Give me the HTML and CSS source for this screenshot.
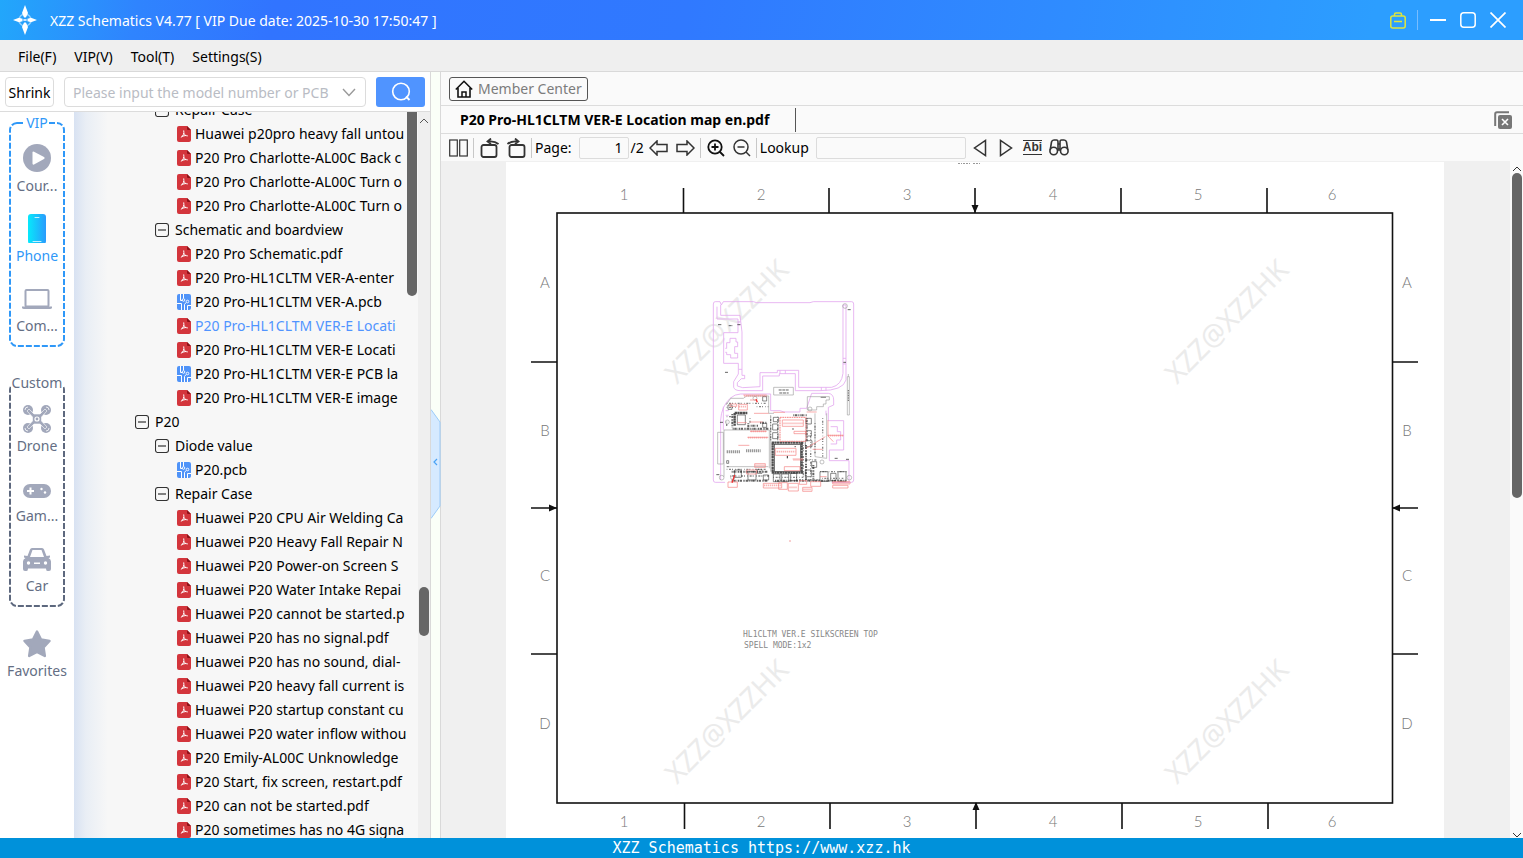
FILE: index.html
```html
<!DOCTYPE html>
<html lang="en">
<head>
<meta charset="utf-8">
<title>XZZ Schematics</title>
<link rel="stylesheet" href="styles.css">
</head>
<body>
<svg class="defs" aria-hidden="true">
  <symbol id="pdf" viewBox="0 0 14 16"><path d="M2 0H10L14 4V14a2 2 0 0 1-2 2H2a2 2 0 0 1-2-2V2a2 2 0 0 1 2-2z" fill="#d3353c"/><path d="M10 0L14 4H11a1 1 0 0 1-1-1z" fill="#8e1218"/><path d="M6.800 4.800C7.400 7.500 6 10 4.500 11.300M6.900 7.500C7.600 9 8.800 9.800 10.400 9.900M4.800 10.300L8.800 9.500" fill="none" stroke="#fff" stroke-width="1" stroke-linecap="round"/></symbol>
  <symbol id="pcb" viewBox="0 0 14 16"><rect width="14" height="16" rx="2" fill="#4f93f8"/><path d="M3.500 0V6.500H5.500M6.500 0V4.500M0 9.500H4.500V16M7.500 16V10.500L9 8.500M10.500 16V11.500H14" fill="none" stroke="#fff"/><circle cx="6.500" cy="6" r="1.300" fill="#4f93f8" stroke="#fff" stroke-width=".9"/><circle cx="10.500" cy="7.500" r="1.300" fill="#4f93f8" stroke="#fff" stroke-width=".9"/></symbol>
  <symbol id="minus" viewBox="0 0 14 14"><rect x=".5" y=".5" width="13" height="13" rx="2.500" fill="none" stroke="#333" stroke-width="1.100"/><path d="M3 7H11" stroke="#333" stroke-width="1.200"/></symbol>
</svg>

<header class="titlebar">
  <svg class="logo" viewBox="0 0 26 30"><circle cx="13" cy="15" r="6" fill="none" stroke="#8fd0ff" stroke-width="1.500"/><path d="M13 0L16 8 13.700 13H12.300L10 8zM13 30L16 22 13.700 17H12.300L10 22zM1 15L7 12.800 12 14.300V15.700L7 17.200zM25 15L19 12.800 14 14.300V15.700L19 17.200z" fill="#fff"/><path d="M13 12V18M10 15H16" stroke="#2a9bfc"/><circle cx="13" cy="15" r="1" fill="#fff"/></svg>
  <h1 class="title">XZZ Schematics V4.77 [ VIP Due date: 2025-10-30 17:50:47 ]</h1>
  <div class="window-controls">
    <button aria-label="Toolbox"><svg width="16" height="17" viewBox="0 0 16 17" fill="none" stroke="#dfe63c" stroke-width="1.500"><rect x=".8" y="4" width="14.400" height="12" rx="2"/><path d="M4.500 4V2.500A1.500 1.500 0 0 1 6 1H10a1.500 1.500 0 0 1 1.500 1.500V4M4 9.500H12" /></svg></button>
    <span class="control-line"></span>
    <button aria-label="Minimize"><svg width="16" height="16"><path d="M0 8H16" stroke="#fff" stroke-width="2"/></svg></button>
    <button aria-label="Maximize"><svg width="16" height="16"><rect x=".8" y=".8" width="14.400" height="14.400" rx="3" fill="none" stroke="#fff" stroke-width="1.500"/></svg></button>
    <button aria-label="Close"><svg width="16" height="16"><path d="M.5 .5L15.500 15.500M15.500 .5L.5 15.500" stroke="#fff" stroke-width="1.700"/></svg></button>
  </div>
</header>

<nav class="menubar">
  <button>File(F)</button><button>VIP(V)</button><button>Tool(T)</button><button>Settings(S)</button>
</nav>

<main class="workspace">
  <aside class="sidebar">
    <form class="search">
      <button type="button" class="shrink">Shrink</button>
      <div class="combo">
        <input type="text" aria-label="Model search" placeholder="Please input the model number or PCB">
        <button type="button" aria-label="History"><svg width="14" height="9"><path d="M1 1L7 7.500 13 1" fill="none" stroke="#999" stroke-width="1.400"/></svg></button>
      </div>
      <button type="button" class="go" aria-label="Search"><svg width="20" height="20" fill="none" stroke="#fff" stroke-width="1.600"><circle cx="10" cy="9.500" r="8.300"/><path d="M15 14.500L18.500 18" stroke-width="2"/></svg></button>
    </form>
    <div class="side-body">
      <nav class="rail">
        <section class="group vip">
          <svg class="frame"><rect x="1" y="1"/></svg>
          <h2>VIP</h2>
          <button><svg viewBox="0 0 30 30"><circle cx="15" cy="15" r="14" fill="#a2a8bb"/><path d="M10.500 9.500Q10.500 8 12 8.700L22 14Q23.500 15 22 16L12 21.500Q10.500 22 10.500 20.500z" fill="#fff"/></svg><span>Cour...</span></button>
          <button class="active"><svg viewBox="0 0 30 30"><defs><linearGradient id="ph"><stop stop-color="#07e9fb"/><stop offset="1" stop-color="#2a9bfd"/></linearGradient></defs><rect x="6" y="1" width="18" height="30" rx="3" fill="url(#ph)"/><path d="M13 4.500H17M11 28.500H19" stroke="#c4f2ff" stroke-linecap="round"/></svg><span>Phone</span></button>
          <button><svg viewBox="0 0 30 30"><rect x="3.500" y="7" width="23" height="16.500" rx="1" fill="none" stroke="#a2a8bb" stroke-width="2"/><path d="M0 23.500H30V25Q29.500 26 28 26H2Q.5 26 0 25z" fill="#a2a8bb"/></svg><span>Com...</span></button>
        </section>
        <section class="group custom">
          <svg class="frame"><rect x="1" y="1"/></svg>
          <h2>Custom</h2>
          <button><svg viewBox="0 0 30 30"><g fill="#a2a8bb" transform="translate(0 1)"><circle cx="6" cy="6" r="5"/><circle cx="24" cy="6" r="5"/><circle cx="6" cy="24" r="5"/><circle cx="24" cy="24" r="5"/><path d="M5 7L7 5 12 10H18L23 5 25 7 19.500 13V17L25 23 23 25 18 20H12L7 25 5 23 10.500 17V13z" stroke="#fff" stroke-width=".6"/><circle cx="15" cy="15" r="2" fill="none" stroke="#fff" stroke-width="1.200"/></g><path d="M3 7a3 3 0 0 1 3-3M27 7a3 3 0 0 0-3-3M3 25a3 3 0 0 0 3 3M27 25a3 3 0 0 1-3 3" stroke="#fff" stroke-width=".8" fill="none"/></svg><span>Drone</span></button>
          <button><svg viewBox="0 0 30 30"><rect x="1" y="11" width="28" height="14" rx="7" fill="#a2a8bb"/><path d="M8.500 14.500V21.500M5 18H12" stroke="#fff" stroke-width="2"/><circle cx="19.500" cy="16" r="1.200" fill="#fff"/><circle cx="23" cy="19.500" r="1.200" fill="#fff"/></svg><span>Gam...</span></button>
          <button><svg viewBox="0 0 30 30"><path d="M8 6.500Q8.500 5 10 5H20Q21.500 5 22 6.500L24.500 13 28 12.500V14.500L26.500 15Q29 16 29 18.500V26Q29 28 27 28H25.500Q24 28 24 25.500H6Q6 28 4.500 28H3Q1 28 1 26V18.500Q1 16 3.500 15L2 14.500V12.500L5.500 13z" fill="#a2a8bb"/><path d="M10.500 7H19.500L22 14H8zM12 19.500H18V21H12z" fill="#fff"/><circle cx="6.500" cy="20" r="1.700" fill="#fff"/><circle cx="23.500" cy="20" r="1.700" fill="#fff"/></svg><span>Car</span></button>
        </section>
        <button class="favorites"><svg viewBox="0 0 30 30"><path d="M15 3.500L19 11.500 27.500 13 21.500 19.300 22.800 28 15 24 7.200 28 8.500 19.300 2.500 13 11 11.500z" fill="#a2a8bb" stroke="#a2a8bb" stroke-width="2.500" stroke-linejoin="round"/></svg><span>Favorites</span></button>
      </nav>
      <div class="tree">
        <ul>
          <li class="folder inner"><button aria-label="Collapse"><svg><use href="#minus"/></svg></button>Repair Case</li>
          <li><a href="#"><svg><use href="#pdf"/></svg>Huawei p20pro heavy fall untou</a></li>
          <li><a href="#"><svg><use href="#pdf"/></svg>P20 Pro Charlotte-AL00C Back c</a></li>
          <li><a href="#"><svg><use href="#pdf"/></svg>P20 Pro Charlotte-AL00C Turn o</a></li>
          <li><a href="#"><svg><use href="#pdf"/></svg>P20 Pro Charlotte-AL00C Turn o</a></li>
          <li class="folder inner"><button aria-label="Collapse"><svg><use href="#minus"/></svg></button>Schematic and boardview</li>
          <li><a href="#"><svg><use href="#pdf"/></svg>P20 Pro Schematic.pdf</a></li>
          <li><a href="#"><svg><use href="#pdf"/></svg>P20 Pro-HL1CLTM VER-A-enter</a></li>
          <li><a href="#"><svg><use href="#pcb"/></svg>P20 Pro-HL1CLTM VER-A.pcb</a></li>
          <li><a href="#" class="selected"><svg><use href="#pdf"/></svg>P20 Pro-HL1CLTM VER-E Locati</a></li>
          <li><a href="#"><svg><use href="#pdf"/></svg>P20 Pro-HL1CLTM VER-E Locati</a></li>
          <li><a href="#"><svg><use href="#pcb"/></svg>P20 Pro-HL1CLTM VER-E PCB la</a></li>
          <li><a href="#"><svg><use href="#pdf"/></svg>P20 Pro-HL1CLTM VER-E image</a></li>
          <li class="folder outer"><button aria-label="Collapse"><svg><use href="#minus"/></svg></button>P20</li>
          <li class="folder inner"><button aria-label="Collapse"><svg><use href="#minus"/></svg></button>Diode value</li>
          <li><a href="#"><svg><use href="#pcb"/></svg>P20.pcb</a></li>
          <li class="folder inner"><button aria-label="Collapse"><svg><use href="#minus"/></svg></button>Repair Case</li>
          <li><a href="#"><svg><use href="#pdf"/></svg>Huawei P20 CPU Air Welding Ca</a></li>
          <li><a href="#"><svg><use href="#pdf"/></svg>Huawei P20 Heavy Fall Repair N</a></li>
          <li><a href="#"><svg><use href="#pdf"/></svg>Huawei P20 Power-on Screen S</a></li>
          <li><a href="#"><svg><use href="#pdf"/></svg>Huawei P20 Water Intake Repai</a></li>
          <li><a href="#"><svg><use href="#pdf"/></svg>Huawei P20 cannot be started.p</a></li>
          <li><a href="#"><svg><use href="#pdf"/></svg>Huawei P20 has no signal.pdf</a></li>
          <li><a href="#"><svg><use href="#pdf"/></svg>Huawei P20 has no sound, dial-</a></li>
          <li><a href="#"><svg><use href="#pdf"/></svg>Huawei P20 heavy fall current is</a></li>
          <li><a href="#"><svg><use href="#pdf"/></svg>Huawei P20 startup constant cu</a></li>
          <li><a href="#"><svg><use href="#pdf"/></svg>Huawei P20 water inflow withou</a></li>
          <li><a href="#"><svg><use href="#pdf"/></svg>P20 Emily-AL00C Unknowledge</a></li>
          <li><a href="#"><svg><use href="#pdf"/></svg>P20 Start, fix screen, restart.pdf</a></li>
          <li><a href="#"><svg><use href="#pdf"/></svg>P20 can not be started.pdf</a></li>
          <li><a href="#"><svg><use href="#pdf"/></svg>P20 sometimes has no 4G signa</a></li>
        </ul>
      </div>
      <div class="bar inner-bar"><span class="thumb"></span></div>
      <div class="bar outer-bar"><svg width="10" height="6"><path d="M1 5L5 1 9 5" fill="none" stroke="#555"/></svg><span class="thumb"></span></div>
    </div>
  </aside>

  <div class="splitter">
    <button aria-label="Collapse panel"><svg width="10" height="110"><path d="M0 .5L9 13V97L0 109.500" fill="#d6eaff" stroke="#9ccbf8"/><path d="M6 50L3 53 6 56" fill="none" stroke="#4aa3f5" stroke-width="1.200"/></svg></button>
  </div>

  <section class="content">
    <div class="member-row">
      <button class="member"><svg width="18" height="18" viewBox="0 0 18 18" fill="none" stroke="#111" stroke-width="1.600"><path d="M.8 9.500L9 1.300 17.200 9.500M3 8V17H15V8"/><path d="M7 17V12H11V17" stroke-width="1.500"/></svg>Member Center</button>
    </div>
    <div class="tabs">
      <button class="tab">P20 Pro-HL1CLTM VER-E Location map en.pdf</button>
      <button class="close-all" aria-label="Close all"><svg width="18" height="18"><path d="M1.200 15V3Q1.200 1.200 3 1.200H15" fill="none" stroke="#777" stroke-width="2"/><rect x="4" y="4" width="14" height="14" rx="2" fill="#777"/><path d="M8 8L14 14M14 8L8 14" stroke="#fff" stroke-width="1.600"/></svg></button>
    </div>
    <div class="toolbar">
      <button aria-label="Two pages"><svg width="19" height="18" fill="none" stroke="#333" stroke-width="1.200"><rect x=".7" y="1" width="7.600" height="16"/><rect x="10.700" y="1" width="7.600" height="16"/></svg></button>
      <i class="rule"></i>
      <button aria-label="Rotate left"><svg width="19" height="20" fill="none" stroke="#333" stroke-width="1.800"><rect x="1.500" y="7" width="15" height="12" rx="2"/><path d="M18.500 6Q14.500 2.500 8 3.500M11 .5L7.500 3.500 11 6"/></svg></button>
      <button aria-label="Rotate right" class="gap-l"><svg width="19" height="20" fill="none" stroke="#333" stroke-width="1.800"><rect x="2.500" y="7" width="15" height="12" rx="2"/><path d="M.5 6Q4.500 2.500 11 3.500M8 .5L11.500 3.500 8 6"/></svg></button>
      <i class="rule"></i>
      <label for="page">Page:</label>
      <input id="page" type="text" value="1">
      <span class="total">/2</span>
      <button aria-label="Previous page"><svg width="19" height="16" fill="none" stroke="#333" stroke-width="1.500"><path d="M1 8L8 1V4.500H18V11.500H8V15z"/></svg></button>
      <button aria-label="Next page" class="gap-l"><svg width="19" height="16" fill="none" stroke="#333" stroke-width="1.500"><path d="M18 8L11 1V4.500H1V11.500H11V15z"/></svg></button>
      <i class="rule"></i>
      <button aria-label="Zoom in"><svg width="18" height="18" fill="none" stroke="#111" stroke-width="1.800"><circle cx="8" cy="8" r="6.700"/><path d="M12.500 12.500L17 17M8 4.500V11.500M4.500 8H11.500"/></svg></button>
      <button aria-label="Zoom out" class="gap-l"><svg width="18" height="18" fill="none" stroke="#333" stroke-width="1.500"><circle cx="8" cy="8" r="7"/><path d="M13 13L17 17M4.500 8H11.500"/></svg></button>
      <i class="rule"></i>
      <label for="lookup">Lookup</label>
      <input id="lookup" type="text">
      <button aria-label="Find previous"><svg width="14" height="18"><path d="M12.500 1.500V16.500L1.500 9z" fill="none" stroke="#333" stroke-width="1.500"/></svg></button>
      <button aria-label="Find next" class="gap-tri"><svg width="14" height="18"><path d="M1.500 1.500V16.500L12.500 9z" fill="none" stroke="#333" stroke-width="1.500"/></svg></button>
      <button class="abi">Abi</button>
      <button aria-label="Find all"><svg width="20" height="17" fill="none" stroke="#333" stroke-width="1.600"><circle cx="4.700" cy="12" r="3.800"/><circle cx="15.300" cy="12" r="3.800"/><path d="M1.200 11L2.500 3Q3 1 5 1H7.500Q9 1 9 3V12M18.800 11L17.500 3Q17 1 15 1H12.500Q11 1 11 3V12M9 5H11M9 10H11"/></svg></button>
    </div>
    <div class="viewer">
      <div class="canvas">
        <svg class="sheet" viewBox="506 162 938 676">
          <g class="watermark">
            <text transform="translate(677 385) rotate(-45)">XZZ@XZZHK</text>
            <text transform="translate(1177 385) rotate(-45)">XZZ@XZZHK</text>
            <text transform="translate(677 785) rotate(-45)">XZZ@XZZHK</text>
            <text transform="translate(1177 785) rotate(-45)">XZZ@XZZHK</text>
          </g>
          <path d="M958 163.500H962M963 163.500H970M973 163.500H980" stroke="#999" stroke-dasharray="2 1"/>
          <g fill="none" stroke="#111" stroke-width="1.600">
            <rect x="557" y="213" width="835.500" height="590"/>
            <path d="M683.500 188V213M829 188V213M975 188V213M1121 188V213M1267 188V213M684.500 803V829M830 803V829M976 803V829M1122 803V829M1268 803V829M531 362H557M531 508H557M531 654H557M1392 362H1418M1392 508H1418M1392 654H1418"/>
          </g>
          <path d="M971.500 205H978.500L975 213zM972.500 810H979.500L976 802zM549 504.500V511.500L557 508zM1400 504.500V511.500L1392 508z" fill="#111"/>
          <g class="zones">
            <text x="624" y="200">1</text><text x="761" y="200">2</text><text x="907" y="200">3</text><text x="1053" y="200">4</text><text x="1198" y="200">5</text><text x="1332" y="200">6</text>
            <text x="624" y="827">1</text><text x="761" y="827">2</text><text x="907" y="827">3</text><text x="1053" y="827">4</text><text x="1198" y="827">5</text><text x="1332" y="827">6</text>
            <text x="545" y="288">A</text><text x="545" y="436">B</text><text x="545" y="581">C</text><text x="545" y="729">D</text>
            <text x="1407" y="288">A</text><text x="1407" y="436">B</text><text x="1407" y="581">C</text><text x="1407" y="729">D</text>
          </g>
          <g class="silk"><text x="743" y="637">HL1CLTM VER.E SILKSCREEN TOP</text><text x="744" y="648">SPELL MODE:1x2</text></g>
          <path d="M789 541H791" stroke="#f2a0a0"/>
          <g transform="translate(700 290) scale(.33333)" fill="none">
            <g stroke="#e3a9ef" stroke-width="2.500">
              <path d="M46 35H60L64 45 70 35H160L170 38 330 38 340 35H455Q461 35 461 42V570Q461 577 454 577H395M75 577H46Q40 577 40 570V42Q40 35 46 35"/>
              <path d="M51 50V87H114V128H71V220H115V252L101 275V292Q104 302 122 302H188V258H238V251H286V302H360Q430 302 438 270V45H429V250Q425 285 395 292H296V241H232V248H180V290L128 293 112 288V278L124 266H134V256H126V126L120 76H62V45"/>
              <path d="M114 96H122M114 104H122M116 238H126M240 241V251M256 241V251M364 292V302M378 292V302M429 205H438M429 222H438"/>
              <path d="M76 175H80V158H90V145H108V156H113V170H104V190H113V204H92V194H80V187H76"/>
              <path d="M62 570V390Q64 350 90 325 105 312 122 312H212V362H240L252 366H300V355H320L335 310H385Q401 312 401 330V345L385 352V392H431V480H388V512H447V575"/>
              <path d="M392 410H412V425H422V450H410V462H392M70 350V420M77 362H86M77 376H86M378 362V376"/>
            </g>
            <g stroke="#999" stroke-width="1.800">
              <path d="M221 292H280V315H221zM442 260H448V375H442zM445 252V260M53 427H70V522H53zM72 420V560M72 420H208V535M78 345L92 325H130L140 318H206V370H222M212 375V545M322 320H388V330H378V342H370V350H350V360H322zM345 370V500L380 505V370M82 530H205"/>
              <circle cx="435" cy="48" r="7"/><circle cx="65" cy="563" r="7"/><circle cx="448" cy="563" r="7"/><circle cx="165" cy="325" r="6"/><circle cx="330" cy="357" r="6"/><circle cx="82" cy="396" r="6"/><circle cx="366" cy="516" r="6"/><circle cx="98" cy="563" r="6"/>
            </g>
            <g stroke="#444" stroke-width="2.500" stroke-dasharray="9 2">
              <path d="M236 300H266M238 309H266M54 104H66M86 107H98M112 104H122M75 247H86M443 59H453M404 505H415M438 508H448M49 554H60M430 217H438M60 397H70"/>
              <path d="M445 300V335" stroke-dasharray="3 2"/>
            </g>
            <g stroke="#999" stroke-width="9" stroke-dasharray="4 2"><path d="M80 485H120M138 482H182"/></g>
            <g stroke="#222">
              <path d="M104 369H142M104 369V407M215 458H310M305 458V545M218 458V545M215 548H310" stroke-width="7" stroke-dasharray="7 1" opacity=".8"/>
              <path d="M97 372V412M98 416H205M145 400V416M152 407H175M180 398H200M280 376H320M320 385V455M318 465V570M95 545H205M95 572H205M225 572H440M340 525V572" stroke-width="6" stroke-dasharray="3 2 7 3 2 2" opacity=".7"/>
              <path d="M80 340H200M80 352H110M170 350H205M80 380H95M80 395V410M150 385V398M212 380V455M233 380V455M368 385V500M345 400V490M310 465V560M332 430V570M80 538H200M90 558H210M220 562H310M310 510H350M360 545H440M366 565H430M290 570H360" stroke-width="4" stroke-dasharray="2 5 6 3 3 7" opacity=".55"/>
              <path d="M220 382H236V395H220zM218 402H234V420H218zM218 428H234V446H218zM188 320H200V333H188zM84 345H96V358H84zM112 375H136V404H112zM188 400H200V412H188zM318 385H334V402H318zM318 422H334V438H318zM316 452H336V470H316zM335 515H350V532H335zM104 540H124V562H104zM144 545H168V570H144zM172 538H186V550H172zM190 555H206V570H190zM220 552H240V575H220zM245 552H266V575H245zM272 550H290V572H272zM316 540H334V560H316zM360 545H384V574H360zM392 550H408V572H392zM414 545H438V574H414zM362 322H378M80 512H86V520H80zM80 530H86" stroke-width="2" opacity=".8"/>
            </g>
            <rect x="224" y="464" width="78" height="80" fill="#fff" stroke="#333" stroke-width="2"/>
            <g stroke="#f58282" stroke-width="3">
              <rect x="240" y="382" width="78" height="72" stroke-dasharray="5 2"/>
              <path d="M247 390H310V409H247zM282 424H318V431H282zM226 475H288V496H226zM253 530H300V542H253zM116 343H142V360H116zM90 342H110V349H90zM130 315H200M162 370H206M220 367H255M320 366H350M150 396H188M150 424H200M142 442H205M115 466H148M112 398H140M164 521H196V532H164zM140 540H170V552H140zM278 507H310M338 478H368M318 475L376 440M382 436H430M384 390V438L400 455M150 330H172M84 576H112V592H84zM190 580H245V594H190zM236 578H262V598H236zM265 580H295V603H265zM298 572H320V583H298zM308 592H336V604H308zM332 575H362V589H332zM360 560H380M398 575H450V582H398zM398 586H444V594H398z" stroke-width="2"/>
              <path d="M250 400H308M230 485H286M132 318H200M144 443H204M166 526H194M192 586H242M268 592H292M400 578H446M384 437H430M116 350H140M280 510H308M152 424H198M310 598H334" stroke-width="5" stroke-dasharray="4 2" opacity=".6"/>
              <path d="M104 555L96 578M168 328L172 337" stroke="#ee3232" stroke-width="4"/>
            </g>
            <path d="M262 498V505M277 417H281M284 470H287" stroke="#222" stroke-width="3"/>
          </g>
        </svg>
      </div>
      <div class="bar page-bar"><svg width="10" height="6"><path d="M1 5L5 1 9 5" fill="none" stroke="#333"/></svg><span class="thumb"></span><svg class="down" width="10" height="6"><path d="M1 1L5 5 9 1" fill="none" stroke="#333"/></svg></div>
    </div>
  </section>
</main>

<footer class="status">XZZ Schematics https://www.xzz.hk</footer>
</body>
</html>
```

FILE: styles.css
```css
* { box-sizing: border-box; }

body {
  margin: 0;
  height: 100vh;
  display: flex;
  flex-direction: column;
  overflow: hidden;
  font: 14px/20px "Noto Sans", "Open Sans", sans-serif;
  color: #000;
  background: #fff;
}

button, input { font: inherit; color: inherit; }
button { border: 0; padding: 0; background: none; display: flex; align-items: center; justify-content: center; }
svg { display: block; flex: none; }
h1, h2, ul { margin: 0; padding: 0; font: inherit; }
.defs { position: absolute; width: 0; height: 0; }

.titlebar {
  flex: none;
  height: 40px;
  padding: 0 17px 0 12px;
  display: flex;
  align-items: center;
  gap: 12px;
  color: #fff;
  background: linear-gradient(100deg, #22a7fb 0, #2f84fe 9%, #3174ff 18%, #3079ff 45%, #2f8cff 70%, #2c9eff 90%);
}
.logo { width: 26px; height: 30px; }
.title { flex: 1; padding-top: 2px; }
.window-controls { display: flex; align-items: center; gap: 14px; }
.control-line { width: 1px; height: 20px; margin: 0 -2px 0 -3px; background: #78bdff; }

.menubar {
  flex: none;
  height: 32px;
  padding: 2px 18px 0;
  display: flex;
  gap: 18px;
  background: #efefef;
  border-bottom: 1px solid #d9d9d9;
}

.workspace { flex: 1; min-height: 0; display: flex; }

.sidebar { flex: none; width: 431px; display: flex; flex-direction: column; border-right: 1px solid #d9d9d9; }
.search { flex: none; height: 40px; padding: 5px 5px 4px; display: flex; gap: 10px; border-bottom: 1px solid #dcdcdc; }
.shrink { width: 49px; height: 30px; padding-top: 2px; border: 1px solid #dcdcdc; border-radius: 4px; }
.combo { flex: 1; height: 30px; display: flex; align-items: center; padding-right: 9px; border: 1px solid #dcdcdc; border-radius: 4px; }
.combo input { flex: 1; min-width: 0; height: 28px; border: 0; padding: 0 6px 0 8px; background: none; outline: 0; }
.combo input::placeholder { color: #b9bcc4; opacity: 1; }
.go { width: 49px; height: 30px; border-radius: 3px; background: #5094ff; }

.side-body { flex: 1; min-height: 0; display: flex; }
.rail { flex: none; width: 74px; padding-top: 10px; display: flex; flex-direction: column; align-items: center; color: #646e84; }
.rail button { flex-direction: column; gap: 3px; position: relative; }
.rail button svg { width: 30px; height: 30px; }
.group { position: relative; width: 56px; padding: 21px 0 11px; display: flex; flex-direction: column; align-items: center; gap: 17px; }
.custom { margin-top: 35px; }
.group h2 { position: absolute; top: -9px; background: #fff; padding: 0 1px; }
.frame { position: absolute; inset: 0; width: 100%; height: 100%; }
.frame rect { width: calc(100% - 2px); height: calc(100% - 2px); rx: 7px; fill: none; stroke: #2f98f8; stroke-width: 2px; stroke-dasharray: 6 2; }
.vip h2, .rail .active { color: #2f98f8; }
.custom .frame rect { stroke: #5d687e; }
.favorites { margin-top: 21px; }

.tree { flex: 1; min-width: 0; overflow: hidden; background: linear-gradient(90deg, #d8e2f2 0, #e9eef5 12px, #f7f7f7 34px); }
.tree ul { list-style: none; margin-top: -14px; }
.tree li { height: 24px; padding-left: 103px; display: flex; align-items: center; white-space: nowrap; }
.tree a { display: flex; align-items: center; gap: 4px; color: inherit; text-decoration: none; }
.tree a svg { width: 14px; height: 16px; }
.tree .selected { color: #5094ff; }
.tree .folder { gap: 6px; }
.tree .inner { padding-left: 81px; }
.tree .outer { padding-left: 61px; }
.folder svg { width: 14px; height: 14px; }

.bar { flex: none; display: flex; flex-direction: column; align-items: center; }
.thumb { width: 10px; border-radius: 5px; background: #666; }
.inner-bar { width: 12px; background: #f7f7f7; }
.inner-bar .thumb { height: 184px; border-radius: 0 0 5px 5px; }
.outer-bar { width: 12px; padding-top: 6px; background: #efefef; }
.outer-bar .thumb { height: 49px; margin-top: 463px; }

.splitter { flex: none; width: 10px; display: flex; align-items: center; background: #fafff8; border-right: 1px solid #d9d9d9; }
.splitter button { margin-top: 18px; }

.content { flex: 1; min-width: 0; display: flex; flex-direction: column; background: #fafafa; }
.member-row { flex: none; height: 34px; padding: 5px 8px 4px; border-bottom: 1px solid #dcdcdc; }
.member { height: 24px; padding: 0 5px; gap: 5px; color: #7c7c7c; border: 1px solid #555; border-radius: 3px; }
.tabs { flex: none; height: 28px; padding: 2px 11px 2px 7px; display: flex; justify-content: space-between; align-items: center; border-bottom: 1px solid #dcdcdc; }
.tab { height: 24px; padding: 0 26px 0 12px; font-weight: 700; border-right: 1px solid #555; }
.toolbar { flex: none; height: 27px; padding: 0 8px; display: flex; align-items: center; }
.rule { width: 1px; height: 20px; margin: 0 6px 0 5px; background: #c8c8c8; }
.gap-l { margin-left: 8px; }
.gap-tri { margin: 0 10px 0 12px; }
.toolbar label { margin-right: 7px; }
.toolbar .rule + label { margin-left: -3px; }
.toolbar input { height: 22px; border: 1px solid #dcdcdc; border-radius: 2px; background: #fafafa; outline: 0; }
#page { width: 50px; text-align: right; padding: 0 5px; }
#lookup { width: 150px; margin-right: 7px; }
.total { margin: 0 5px 0 2px; }
.abi { height: 15px; margin-right: 7px; font: 700 12px/13px "Liberation Sans", sans-serif; color: #333; border: solid #333; border-width: 1px 0; }

.viewer { flex: 1; min-height: 0; display: flex; background: #f0f0f0; }
.canvas { flex: 1; min-width: 0; padding: 1px 66px 0 65px; overflow: hidden; }
.sheet { width: 100%; height: auto; background: #fff; }
.watermark text { font-size: 28px; fill: #ebebeb; }
.zones text { font: 300 15px Lato, sans-serif; fill: #777; text-anchor: middle; }
.silk text { font: 8px "DejaVu Sans Mono", monospace; fill: #888; }
.page-bar { width: 13px; padding-top: 5px; background: #fafafa; }
.page-bar .thumb { flex: none; height: 325px; margin-top: 1px; }
.down { margin-top: auto; }

.status {
  flex: none;
  height: 20px;
  text-align: center;
  color: #fff;
  background: #0091da;
  font: 15px/20px "DejaVu Sans Mono", monospace;
}
```
